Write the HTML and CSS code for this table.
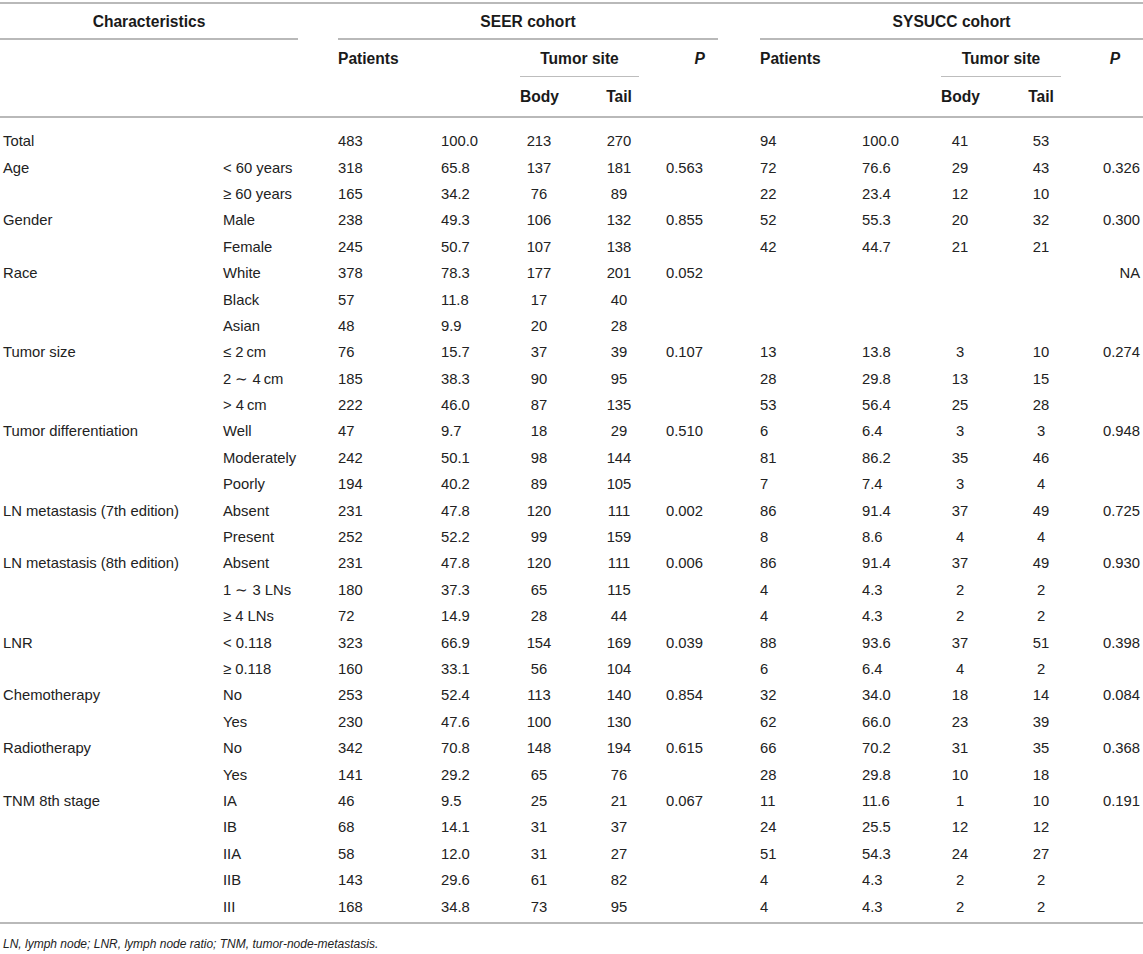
FILE: index.html
```html
<!DOCTYPE html>
<html>
<head>
<meta charset="utf-8">
<link rel="stylesheet" href="styles.css">
</head>
<body>
<table class="tbl">
  <colgroup>
    <col class="c-a"><col class="c-b"><col class="c-gap1">
    <col class="c-n"><col class="c-pct"><col class="c-body"><col class="c-tail"><col class="c-p">
    <col class="c-gap2">
    <col class="c-n2"><col class="c-pct"><col class="c-body"><col class="c-tail2"><col class="c-p2">
  </colgroup>
  <thead>
    <tr class="h1">
      <th colspan="2" class="line center">Characteristics</th>
      <th></th>
      <th colspan="5" class="line center">SEER cohort</th>
      <th></th>
      <th colspan="5" class="line center">SYSUCC cohort</th>
    </tr>
    <tr class="h2">
      <th colspan="2"></th>
      <th></th>
      <th colspan="2" class="left">Patients</th>
      <th colspan="2" class="line thin center">Tumor site</th>
      <th class="pcol"><i>P</i></th>
      <th></th>
      <th colspan="2" class="left">Patients</th>
      <th colspan="2" class="line thin center">Tumor site</th>
      <th class="pcol2"><i>P</i></th>
    </tr>
    <tr class="h3">
      <th></th><th></th><th></th><th></th><th></th>
      <th class="body">Body</th>
      <th class="tail">Tail</th>
      <th></th><th></th><th></th><th></th>
      <th class="body">Body</th>
      <th class="tail2">Tail</th>
      <th></th>
    </tr>
  </thead>
  <tbody>
    <tr class="first"><td class="lab">Total</td><td class="sub"></td><td></td><td class="n">483</td><td class="n">100.0</td><td class="body">213</td><td class="tail">270</td><td class="pv"></td><td></td><td class="n">94</td><td class="n">100.0</td><td class="body">41</td><td class="tail2">53</td><td class="pv2"></td></tr>
    <tr><td class="lab">Age</td><td class="sub">&lt; 60 years</td><td></td><td class="n">318</td><td class="n">65.8</td><td class="body">137</td><td class="tail">181</td><td class="pv">0.563</td><td></td><td class="n">72</td><td class="n">76.6</td><td class="body">29</td><td class="tail2">43</td><td class="pv2">0.326</td></tr>
    <tr><td class="lab"></td><td class="sub">≥ 60 years</td><td></td><td class="n">165</td><td class="n">34.2</td><td class="body">76</td><td class="tail">89</td><td class="pv"></td><td></td><td class="n">22</td><td class="n">23.4</td><td class="body">12</td><td class="tail2">10</td><td class="pv2"></td></tr>
    <tr><td class="lab">Gender</td><td class="sub">Male</td><td></td><td class="n">238</td><td class="n">49.3</td><td class="body">106</td><td class="tail">132</td><td class="pv">0.855</td><td></td><td class="n">52</td><td class="n">55.3</td><td class="body">20</td><td class="tail2">32</td><td class="pv2">0.300</td></tr>
    <tr><td class="lab"></td><td class="sub">Female</td><td></td><td class="n">245</td><td class="n">50.7</td><td class="body">107</td><td class="tail">138</td><td class="pv"></td><td></td><td class="n">42</td><td class="n">44.7</td><td class="body">21</td><td class="tail2">21</td><td class="pv2"></td></tr>
    <tr><td class="lab">Race</td><td class="sub">White</td><td></td><td class="n">378</td><td class="n">78.3</td><td class="body">177</td><td class="tail">201</td><td class="pv">0.052</td><td></td><td class="n"></td><td class="n"></td><td class="body"></td><td class="tail2"></td><td class="pv2">NA</td></tr>
    <tr><td class="lab"></td><td class="sub">Black</td><td></td><td class="n">57</td><td class="n">11.8</td><td class="body">17</td><td class="tail">40</td><td class="pv"></td><td></td><td class="n"></td><td class="n"></td><td class="body"></td><td class="tail2"></td><td class="pv2"></td></tr>
    <tr><td class="lab"></td><td class="sub">Asian</td><td></td><td class="n">48</td><td class="n">9.9</td><td class="body">20</td><td class="tail">28</td><td class="pv"></td><td></td><td class="n"></td><td class="n"></td><td class="body"></td><td class="tail2"></td><td class="pv2"></td></tr>
    <tr><td class="lab">Tumor size</td><td class="sub">≤ 2&#8201;cm</td><td></td><td class="n">76</td><td class="n">15.7</td><td class="body">37</td><td class="tail">39</td><td class="pv">0.107</td><td></td><td class="n">13</td><td class="n">13.8</td><td class="body">3</td><td class="tail2">10</td><td class="pv2">0.274</td></tr>
    <tr><td class="lab"></td><td class="sub">2 ∼ 4&#8201;cm</td><td></td><td class="n">185</td><td class="n">38.3</td><td class="body">90</td><td class="tail">95</td><td class="pv"></td><td></td><td class="n">28</td><td class="n">29.8</td><td class="body">13</td><td class="tail2">15</td><td class="pv2"></td></tr>
    <tr><td class="lab"></td><td class="sub">&gt; 4&#8201;cm</td><td></td><td class="n">222</td><td class="n">46.0</td><td class="body">87</td><td class="tail">135</td><td class="pv"></td><td></td><td class="n">53</td><td class="n">56.4</td><td class="body">25</td><td class="tail2">28</td><td class="pv2"></td></tr>
    <tr><td class="lab">Tumor differentiation</td><td class="sub">Well</td><td></td><td class="n">47</td><td class="n">9.7</td><td class="body">18</td><td class="tail">29</td><td class="pv">0.510</td><td></td><td class="n">6</td><td class="n">6.4</td><td class="body">3</td><td class="tail2">3</td><td class="pv2">0.948</td></tr>
    <tr><td class="lab"></td><td class="sub">Moderately</td><td></td><td class="n">242</td><td class="n">50.1</td><td class="body">98</td><td class="tail">144</td><td class="pv"></td><td></td><td class="n">81</td><td class="n">86.2</td><td class="body">35</td><td class="tail2">46</td><td class="pv2"></td></tr>
    <tr><td class="lab"></td><td class="sub">Poorly</td><td></td><td class="n">194</td><td class="n">40.2</td><td class="body">89</td><td class="tail">105</td><td class="pv"></td><td></td><td class="n">7</td><td class="n">7.4</td><td class="body">3</td><td class="tail2">4</td><td class="pv2"></td></tr>
    <tr><td class="lab">LN metastasis (7th edition)</td><td class="sub">Absent</td><td></td><td class="n">231</td><td class="n">47.8</td><td class="body">120</td><td class="tail">111</td><td class="pv">0.002</td><td></td><td class="n">86</td><td class="n">91.4</td><td class="body">37</td><td class="tail2">49</td><td class="pv2">0.725</td></tr>
    <tr><td class="lab"></td><td class="sub">Present</td><td></td><td class="n">252</td><td class="n">52.2</td><td class="body">99</td><td class="tail">159</td><td class="pv"></td><td></td><td class="n">8</td><td class="n">8.6</td><td class="body">4</td><td class="tail2">4</td><td class="pv2"></td></tr>
    <tr><td class="lab">LN metastasis (8th edition)</td><td class="sub">Absent</td><td></td><td class="n">231</td><td class="n">47.8</td><td class="body">120</td><td class="tail">111</td><td class="pv">0.006</td><td></td><td class="n">86</td><td class="n">91.4</td><td class="body">37</td><td class="tail2">49</td><td class="pv2">0.930</td></tr>
    <tr><td class="lab"></td><td class="sub">1 ∼ 3 LNs</td><td></td><td class="n">180</td><td class="n">37.3</td><td class="body">65</td><td class="tail">115</td><td class="pv"></td><td></td><td class="n">4</td><td class="n">4.3</td><td class="body">2</td><td class="tail2">2</td><td class="pv2"></td></tr>
    <tr><td class="lab"></td><td class="sub">≥ 4 LNs</td><td></td><td class="n">72</td><td class="n">14.9</td><td class="body">28</td><td class="tail">44</td><td class="pv"></td><td></td><td class="n">4</td><td class="n">4.3</td><td class="body">2</td><td class="tail2">2</td><td class="pv2"></td></tr>
    <tr><td class="lab">LNR</td><td class="sub">&lt; 0.118</td><td></td><td class="n">323</td><td class="n">66.9</td><td class="body">154</td><td class="tail">169</td><td class="pv">0.039</td><td></td><td class="n">88</td><td class="n">93.6</td><td class="body">37</td><td class="tail2">51</td><td class="pv2">0.398</td></tr>
    <tr><td class="lab"></td><td class="sub">≥ 0.118</td><td></td><td class="n">160</td><td class="n">33.1</td><td class="body">56</td><td class="tail">104</td><td class="pv"></td><td></td><td class="n">6</td><td class="n">6.4</td><td class="body">4</td><td class="tail2">2</td><td class="pv2"></td></tr>
    <tr><td class="lab">Chemotherapy</td><td class="sub">No</td><td></td><td class="n">253</td><td class="n">52.4</td><td class="body">113</td><td class="tail">140</td><td class="pv">0.854</td><td></td><td class="n">32</td><td class="n">34.0</td><td class="body">18</td><td class="tail2">14</td><td class="pv2">0.084</td></tr>
    <tr><td class="lab"></td><td class="sub">Yes</td><td></td><td class="n">230</td><td class="n">47.6</td><td class="body">100</td><td class="tail">130</td><td class="pv"></td><td></td><td class="n">62</td><td class="n">66.0</td><td class="body">23</td><td class="tail2">39</td><td class="pv2"></td></tr>
    <tr><td class="lab">Radiotherapy</td><td class="sub">No</td><td></td><td class="n">342</td><td class="n">70.8</td><td class="body">148</td><td class="tail">194</td><td class="pv">0.615</td><td></td><td class="n">66</td><td class="n">70.2</td><td class="body">31</td><td class="tail2">35</td><td class="pv2">0.368</td></tr>
    <tr><td class="lab"></td><td class="sub">Yes</td><td></td><td class="n">141</td><td class="n">29.2</td><td class="body">65</td><td class="tail">76</td><td class="pv"></td><td></td><td class="n">28</td><td class="n">29.8</td><td class="body">10</td><td class="tail2">18</td><td class="pv2"></td></tr>
    <tr><td class="lab">TNM 8th stage</td><td class="sub">IA</td><td></td><td class="n">46</td><td class="n">9.5</td><td class="body">25</td><td class="tail">21</td><td class="pv">0.067</td><td></td><td class="n">11</td><td class="n">11.6</td><td class="body">1</td><td class="tail2">10</td><td class="pv2">0.191</td></tr>
    <tr><td class="lab"></td><td class="sub">IB</td><td></td><td class="n">68</td><td class="n">14.1</td><td class="body">31</td><td class="tail">37</td><td class="pv"></td><td></td><td class="n">24</td><td class="n">25.5</td><td class="body">12</td><td class="tail2">12</td><td class="pv2"></td></tr>
    <tr><td class="lab"></td><td class="sub">IIA</td><td></td><td class="n">58</td><td class="n">12.0</td><td class="body">31</td><td class="tail">27</td><td class="pv"></td><td></td><td class="n">51</td><td class="n">54.3</td><td class="body">24</td><td class="tail2">27</td><td class="pv2"></td></tr>
    <tr><td class="lab"></td><td class="sub">IIB</td><td></td><td class="n">143</td><td class="n">29.6</td><td class="body">61</td><td class="tail">82</td><td class="pv"></td><td></td><td class="n">4</td><td class="n">4.3</td><td class="body">2</td><td class="tail2">2</td><td class="pv2"></td></tr>
    <tr class="last"><td class="lab"></td><td class="sub">III</td><td></td><td class="n">168</td><td class="n">34.8</td><td class="body">73</td><td class="tail">95</td><td class="pv"></td><td></td><td class="n">4</td><td class="n">4.3</td><td class="body">2</td><td class="tail2">2</td><td class="pv2"></td></tr>
  </tbody>
</table>
<p class="foot">LN, lymph node; LNR, lymph node ratio; TNM, tumor-node-metastasis.</p>
</body>
</html>
```

FILE: styles.css
```css
html, body {
  margin: 0;
  padding: 0;
  background: #ffffff;
}

body {
  font-family: "Liberation Sans", Arial, Helvetica, sans-serif;
  color: #222222;
  font-size: 14.8px;
}

.tbl {
  margin-top: 2px;
  width: 1143px;
  table-layout: fixed;
  border-collapse: separate;
  border-spacing: 0;
  border-top: 2px solid #b9b9b9;
  border-bottom: 2px solid #b9b9b9;
}

.c-a { width: 223px; }
.c-b { width: 75px; }
.c-gap1 { width: 40px; }
.c-n { width: 103px; }
.c-pct { width: 79px; }
.c-body { width: 59px; }
.c-tail { width: 60px; }
.c-p { width: 79px; }
.c-gap2 { width: 42px; }
.c-n2 { width: 102px; }
.c-tail2 { width: 61px; }
.c-p2 { width: 82px; }

th, td {
  padding: 0;
  vertical-align: middle;
  white-space: nowrap;
  line-height: 17px;
}

th {
  font-weight: bold;
  font-size: 15.6px;
  color: #1a1a1a;
}

.center { text-align: center; }
.left { text-align: left; }

.line { border-bottom: 2px solid #b9b9b9; }
.thin { border-bottom: 1.5px solid #bdbdbd; }

.h1 { height: 36px; }
.h2 { height: 37px; }
.h3 { height: 41px; }
.h3 th { border-bottom: 2px solid #b9b9b9; }

.pcol { text-align: right; padding-right: 13px; }
.pcol2 { text-align: right; padding-right: 23px; }

tbody tr { height: 26.4px; }
tbody tr.first { height: 36.9px; }
tbody tr.first td { padding-top: 10.5px; }
tbody tr.last { height: 28.4px; }
tbody tr.last td { padding-bottom: 2px; }

.lab { padding-left: 3px; text-align: left; }
.sub { text-align: left; }
.n { text-align: left; }
.body { text-align: center; padding-right: 21px; }
.tail { text-align: center; padding-left: 20px; }
.tail2 { text-align: center; padding-left: 21px; }
.pv { text-align: right; padding-right: 15px; }
.pv2 { text-align: right; padding-right: 3px; }

.foot {
  margin: 13px 0 0 3px;
  font-style: italic;
  font-size: 12px;
  line-height: 15px;
  color: #222222;
}
```
